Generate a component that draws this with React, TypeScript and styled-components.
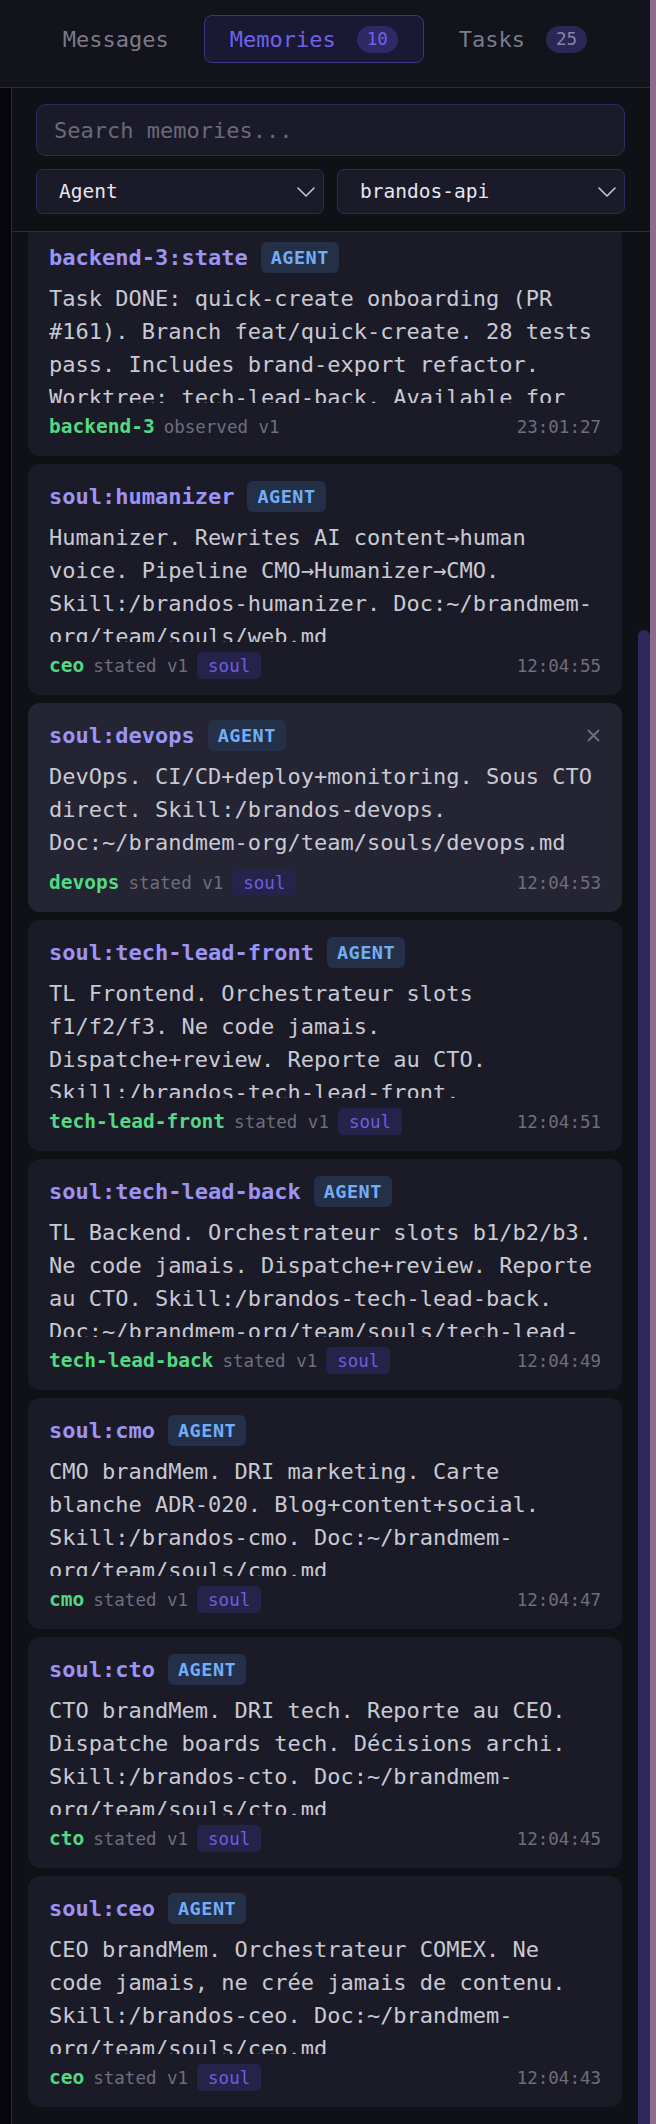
import React from "react";
import styled, { createGlobalStyle } from "styled-components";

const GlobalStyle = createGlobalStyle`
  html, body { margin: 0; padding: 0; background: #06060c; }
  body { font-family: "DejaVu Sans Mono", "Liberation Mono", monospace; }
  * { box-sizing: border-box; }
`;

const Shell = styled.div`
  display: flex;
  width: 656px;
  height: 2124px;
  overflow: hidden;
`;

const Main = styled.div`
  flex: 1;
  min-width: 0;
  display: flex;
  flex-direction: column;
`;

const EdgeStrip = styled.div`
  width: 6px;
  flex-shrink: 0;
  background: #8d6b8d;
`;

const TabBar = styled.nav`
  height: 88px;
  flex-shrink: 0;
  background: #13131b;
  border-bottom: 1px solid #2b2750;
  display: flex;
  justify-content: center;
  align-items: flex-start;
  gap: 9px;
  padding-top: 15px;
`;

const Tab = styled.button<{ $active?: boolean }>`
  height: 48px;
  padding: 0 25px;
  display: flex;
  align-items: center;
  gap: 21px;
  border-radius: 8px;
  border: 1.5px solid ${(p) => (p.$active ? "#3b3585" : "transparent")};
  background: ${(p) => (p.$active ? "#1a1833" : "transparent")};
  color: ${(p) => (p.$active ? "#6d63ea" : "#7b7b8a")};
  font-family: inherit;
  font-size: 22px;
  cursor: pointer;
`;

const Count = styled.span<{ $active?: boolean }>`
  height: 27px;
  min-width: 41px;
  padding: 0 10px;
  border-radius: 14px;
  display: inline-flex;
  align-items: center;
  justify-content: center;
  font-size: 17.5px;
  background: ${(p) => (p.$active ? "#2e2a66" : "#2a2756")};
  color: ${(p) => (p.$active ? "#6d63ea" : "#8784a8")};
`;

const Workspace = styled.div`
  flex: 1;
  min-height: 0;
  display: flex;
`;

const Backdrop = styled.div`
  width: 11px;
  flex-shrink: 0;
  background: #06060c;
`;

const Panel = styled.section`
  flex: 1;
  min-width: 0;
  display: flex;
  flex-direction: column;
  background: #101017;
  border-left: 1px solid #2b2750;
`;

const Filters = styled.div`
  flex-shrink: 0;
  padding: 16px 25px 17px 24px;
  display: flex;
  flex-direction: column;
  gap: 13px;
  border-bottom: 1px solid #2b2750;
`;

const SearchInput = styled.input`
  height: 52px;
  width: 100%;
  padding: 0 17px;
  border-radius: 10px;
  border: 1.5px solid #312c5e;
  background: #1a1a29;
  color: #dcdce6;
  font-family: inherit;
  font-size: 22px;
  outline: none;
  &::placeholder {
    color: #6a6a78;
  }
`;

const SelectRow = styled.div`
  display: grid;
  grid-template-columns: 1fr 1fr;
  gap: 13px;
`;

const SelectBox = styled.button`
  height: 45px;
  padding: 0 7px 0 22px;
  border-radius: 7px;
  border: 1.5px solid #2d2a58;
  background: #1a1a29;
  color: #e6e6ee;
  font-family: inherit;
  font-size: 19.5px;
  display: flex;
  align-items: center;
  justify-content: space-between;
  cursor: pointer;
`;

const ListArea = styled.div`
  flex: 1;
  min-height: 0;
  display: flex;
  overflow: hidden;
`;

const CardStack = styled.div`
  flex: 1;
  min-width: 0;
  display: flex;
  flex-direction: column;
  gap: 8px;
  padding: 0 16px;
  margin-top: -7px;
`;

const ScrollTrack = styled.div`
  width: 12px;
  flex-shrink: 0;
  display: flex;
  flex-direction: column;
  padding-top: 398px;
`;

const ScrollThumb = styled.div`
  flex: 1;
  background: #2d2958;
  border-radius: 6px 6px 0 0;
`;

const Card = styled.article<{ $hover?: boolean }>`
  flex-shrink: 0;
  display: flex;
  flex-direction: column;
  padding: 17px 21px 16px;
  border-radius: 12px;
  background: ${(p) => (p.$hover ? "#242433" : "#1b1b28")};
`;

const CardHead = styled.header`
  height: 31px;
  display: flex;
  align-items: center;
  gap: 13px;
  margin-bottom: 9px;
`;

const Key = styled.span`
  font-weight: 700;
  font-size: 22px;
  color: #9c94f4;
  white-space: nowrap;
`;

const KindBadge = styled.span`
  height: 31px;
  padding: 0 10px;
  border-radius: 6px;
  background: #243048;
  color: #72aef6;
  font-weight: 700;
  font-size: 18.5px;
  letter-spacing: 0.5px;
  display: inline-flex;
  align-items: center;
`;

const Dismiss = styled.button`
  margin-left: auto;
  width: 16px;
  height: 16px;
  padding: 0;
  border: none;
  background: none;
  color: #70707f;
  display: flex;
  align-items: center;
  justify-content: center;
  cursor: pointer;
`;

const Body = styled.p`
  margin: 0;
  font-size: 22px;
  line-height: 33px;
  color: #c9c9d3;
  max-height: 121px;
  overflow: hidden;
`;

const Foot = styled.footer`
  margin-top: 10px;
  height: 27px;
  display: flex;
  align-items: center;
  gap: 9px;
  white-space: nowrap;
`;

const Author = styled.span`
  font-weight: 700;
  font-size: 19.5px;
  color: #52d982;
`;

const Meta = styled.span`
  font-size: 17.5px;
  color: #6e6e7c;
`;

const Tag = styled.span`
  height: 27px;
  padding: 0 11px;
  border-radius: 5px;
  background: #252349;
  color: #6c5fe0;
  font-size: 17.5px;
  display: inline-flex;
  align-items: center;
`;

const Time = styled.span`
  margin-left: auto;
  font-size: 17.5px;
  color: #6e6e7c;
`;

type Memory = {
  key: string;
  body: string;
  author: string;
  verb: string;
  tag?: string;
  time: string;
  hover?: boolean;
};

const memories: Memory[] = [
  {
    key: "backend-3:state",
    body:
      "Task DONE: quick-create onboarding (PR #161). Branch feat/quick-create. 28 tests pass. Includes brand-export refactor. Worktree: tech-lead-back. Available for next task.",
    author: "backend-3",
    verb: "observed v1",
    time: "23:01:27",
  },
  {
    key: "soul:humanizer",
    body:
      "Humanizer. Rewrites AI content→human voice. Pipeline CMO→Humanizer→CMO. Skill:/brandos-humanizer. Doc:~/brandmem-org/team/souls/web.md",
    author: "ceo",
    verb: "stated v1",
    tag: "soul",
    time: "12:04:55",
  },
  {
    key: "soul:devops",
    body:
      "DevOps. CI/CD+deploy+monitoring. Sous CTO direct. Skill:/brandos-devops. Doc:~/brandmem-org/team/souls/devops.md",
    author: "devops",
    verb: "stated v1",
    tag: "soul",
    time: "12:04:53",
    hover: true,
  },
  {
    key: "soul:tech-lead-front",
    body:
      "TL Frontend. Orchestrateur slots f1/f2/f3. Ne code jamais. Dispatche+review. Reporte au CTO. Skill:/brandos-tech-lead-front. Doc:~/brandmem-org/team/souls/tech-lead-front.md",
    author: "tech-lead-front",
    verb: "stated v1",
    tag: "soul",
    time: "12:04:51",
  },
  {
    key: "soul:tech-lead-back",
    body:
      "TL Backend. Orchestrateur slots b1/b2/b3. Ne code jamais. Dispatche+review. Reporte au CTO. Skill:/brandos-tech-lead-back. Doc:~/brandmem-org/team/souls/tech-lead-back.md",
    author: "tech-lead-back",
    verb: "stated v1",
    tag: "soul",
    time: "12:04:49",
  },
  {
    key: "soul:cmo",
    body:
      "CMO brandMem. DRI marketing. Carte blanche ADR-020. Blog+content+social. Skill:/brandos-cmo. Doc:~/brandmem-org/team/souls/cmo.md",
    author: "cmo",
    verb: "stated v1",
    tag: "soul",
    time: "12:04:47",
  },
  {
    key: "soul:cto",
    body:
      "CTO brandMem. DRI tech. Reporte au CEO. Dispatche boards tech. Décisions archi. Skill:/brandos-cto. Doc:~/brandmem-org/team/souls/cto.md",
    author: "cto",
    verb: "stated v1",
    tag: "soul",
    time: "12:04:45",
  },
  {
    key: "soul:ceo",
    body:
      "CEO brandMem. Orchestrateur COMEX. Ne code jamais, ne crée jamais de contenu. Skill:/brandos-ceo. Doc:~/brandmem-org/team/souls/ceo.md",
    author: "ceo",
    verb: "stated v1",
    tag: "soul",
    time: "12:04:43",
  },
];

const Chevron = () => (
  <svg width="20" height="12" viewBox="0 0 20 12" fill="none">
    <path d="M2 2l8 8 8-8" stroke="#c8c8d2" strokeWidth="1.6" strokeLinecap="round" strokeLinejoin="round" />
  </svg>
);

const CloseIcon = () => (
  <svg width="13" height="13" viewBox="0 0 13 13" fill="none">
    <path d="M1.5 1.5l10 10M11.5 1.5l-10 10" stroke="currentColor" strokeWidth="1.8" strokeLinecap="round" />
  </svg>
);

export default function App() {
  return (
    <>
      <GlobalStyle />
      <Shell>
        <Main>
          <TabBar>
            <Tab>Messages</Tab>
            <Tab $active>
              Memories <Count $active>10</Count>
            </Tab>
            <Tab>
              Tasks <Count>25</Count>
            </Tab>
          </TabBar>
          <Workspace>
            <Backdrop />
            <Panel>
              <Filters>
                <SearchInput placeholder="Search memories..." />
                <SelectRow>
                  <SelectBox>
                    Agent <Chevron />
                  </SelectBox>
                  <SelectBox>
                    brandos-api <Chevron />
                  </SelectBox>
                </SelectRow>
              </Filters>
              <ListArea>
                <CardStack>
                  {memories.map((m) => (
                    <Card key={m.key} $hover={m.hover}>
                      <CardHead>
                        <Key>{m.key}</Key>
                        <KindBadge>AGENT</KindBadge>
                        {m.hover && (
                          <Dismiss aria-label="Delete">
                            <CloseIcon />
                          </Dismiss>
                        )}
                      </CardHead>
                      <Body>{m.body}</Body>
                      <Foot>
                        <Author>{m.author}</Author>
                        <Meta>{m.verb}</Meta>
                        {m.tag && <Tag>{m.tag}</Tag>}
                        <Time>{m.time}</Time>
                      </Foot>
                    </Card>
                  ))}
                </CardStack>
                <ScrollTrack>
                  <ScrollThumb />
                </ScrollTrack>
              </ListArea>
            </Panel>
          </Workspace>
        </Main>
        <EdgeStrip />
      </Shell>
    </>
  );
}
